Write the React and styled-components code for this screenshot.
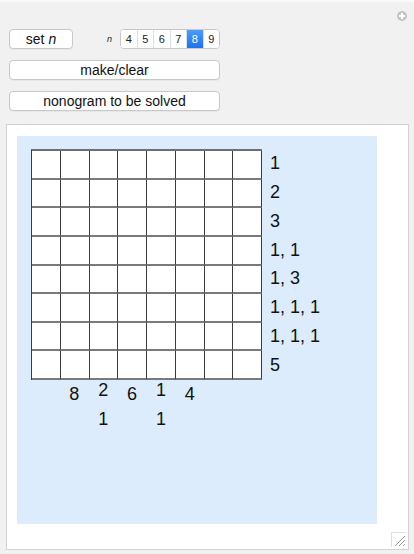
import React from "react";
import styled, { createGlobalStyle } from "styled-components";

const Global = createGlobalStyle`
  html, body { margin: 0; padding: 0; background: #f1f1f1; }
  body { font-family: "Liberation Sans", Arial, sans-serif; }
`;

const Page = styled.div`
  position: relative;
  width: 414px;
  height: 554px;
  box-sizing: border-box;
  border-top: 2px solid #fafafa;
  padding: 26px 6px 0 6px;
`;

const CloseIcon = styled.div`
  position: absolute;
  top: 9px;
  right: 7px;
  width: 10px;
  height: 10px;
  border-radius: 50%;
  background: #c4c4c4;
  &::before, &::after {
    content: "";
    position: absolute;
    background: #fff;
  }
  &::before { left: 2px; right: 2px; top: 4px; height: 2px; }
  &::after { top: 2px; bottom: 2px; left: 4px; width: 2px; }
`;

const Controls = styled.div`
  display: flex;
  flex-direction: column;
  gap: 11px;
  padding-left: 3px;
  width: 211px;
`;

const TopRow = styled.div`
  display: flex;
  align-items: center;
  height: 21px;
`;

const Button = styled.button`
  box-sizing: border-box;
  width: ${(p) => p.$w || "211px"};
  flex: none;
  height: 20px;
  background: #fff;
  border: 1px solid #c8c8c8;
  border-radius: 4px;
  font-family: "Liberation Sans", Arial, sans-serif;
  font-size: 14px;
  color: #111;
  padding: 0;
  line-height: 18px;
  box-shadow: 0 1px 0 rgba(0,0,0,0.04);
`;

const Ital = styled.i`
  font-family: "Liberation Sans", Arial, sans-serif;
  font-size: 14px;
  margin-left: 4px;
`;

const SmallN = styled.i`
  font-family: "Liberation Sans", Arial, sans-serif;
  font-size: 9px;
  margin-left: 34px;
  margin-right: 8px;
  color: #222;
`;

const Segments = styled.div`
  display: flex;
  box-sizing: border-box;
  height: 20px;
  border: 1px solid #c8c8c8;
  border-radius: 4px;
  background: #fff;
  overflow: hidden;
`;

const Seg = styled.div`
  width: 17px;
  display: flex;
  align-items: center;
  justify-content: center;
  font-size: 11px;
  color: ${(p) => (p.$on ? "#fff" : "#222")};
  background: ${(p) => (p.$on ? "linear-gradient(#4f9bf9, #1a73f0)" : "#fff")};
  border-left: ${(p) => (p.$first ? "none" : "1px solid #dedede")};
`;

const Panel = styled.div`
  position: relative;
  box-sizing: border-box;
  margin-top: 13px;
  width: 403px;
  height: 426px;
  background: #fff;
  border: 1px solid #d2d2d2;
  padding: 11px 0 0 10px;
`;

const Canvas = styled.div`
  width: 360px;
  height: 388px;
  background: #dcecfc;
  box-sizing: border-box;
  padding: 13px 0 0 14px;
`;

const Layout = styled.div`
  display: grid;
  grid-template-columns: 231px auto;
  column-gap: 8px;
`;

const Board = styled.div`
  display: grid;
  grid-template-columns: repeat(8, 1fr);
  grid-template-rows: repeat(8, 1fr);
  width: 231px;
  height: 231px;
  box-sizing: border-box;
  border-left: 1px solid #3c3c3c;
  border-top: 2px solid #6e6e6e;
  background: #fff;
`;

const Cell = styled.div`
  border-right: 1px solid #3c3c3c;
  border-bottom: 2px solid #7a7a7a;
`;

const RowClues = styled.div`
  display: grid;
  grid-template-rows: repeat(8, 1fr);
  height: 231px;
`;

const Clue = styled.div`
  display: flex;
  align-items: center;
  font-size: 18px;
  color: #111;
  white-space: pre;
`;

const ColClues = styled.div`
  display: grid;
  grid-template-columns: repeat(8, 1fr);
  width: 231px;
`;

const ColClue = styled.div`
  display: flex;
  flex-direction: column;
  align-items: center;
  gap: 9px;
  margin-top: ${(p) => (p.$single ? "4px" : "0")};
  font-size: 18px;
  line-height: 20px;
  color: #111;
`;

const Grip = styled.svg`
  position: absolute;
  right: 2px;
  bottom: 2px;
`;

const rows = ["1", "2", "3", "1, 1", "1, 3", "1, 1, 1", "1, 1, 1", "5"];
const cols = [[], ["8"], ["2", "1"], ["6"], ["1", "1"], ["4"], [], []];
const ns = [4, 5, 6, 7, 8, 9];

export default function App() {
  return (
    <>
      <Global />
      <Page>
        <CloseIcon />
        <Controls>
          <TopRow>
            <Button $w="64px">
              set<Ital>n</Ital>
            </Button>
            <SmallN>n</SmallN>
            <Segments>
              {ns.map((n, i) => (
                <Seg key={n} $on={n === 8} $first={i === 0}>
                  {n}
                </Seg>
              ))}
            </Segments>
          </TopRow>
          <Button>make/clear</Button>
          <Button>nonogram to be solved</Button>
        </Controls>
        <Panel>
          <Canvas>
            <Layout>
              <Board>
                {Array.from({ length: 64 }).map((_, i) => (
                  <Cell key={i} />
                ))}
              </Board>
              <RowClues>
                {rows.map((r, i) => (
                  <Clue key={i}>{r}</Clue>
                ))}
              </RowClues>
              <ColClues>
                {cols.map((c, i) => (
                  <ColClue key={i} $single={c.length === 1}>
                    {c.map((v, j) => (
                      <span key={j}>{v}</span>
                    ))}
                  </ColClue>
                ))}
              </ColClues>
            </Layout>
          </Canvas>
          <Grip width="15" height="15" viewBox="0 0 15 15">
            <path d="M0.5 15 V0.5 H15" fill="none" stroke="#dedede" />
            <path d="M4 14 L14 4 M8 14 L14 8 M12 14 L14 12" stroke="#9a9a9a" strokeWidth="1" />
          </Grip>
        </Panel>
      </Page>
    </>
  );
}
